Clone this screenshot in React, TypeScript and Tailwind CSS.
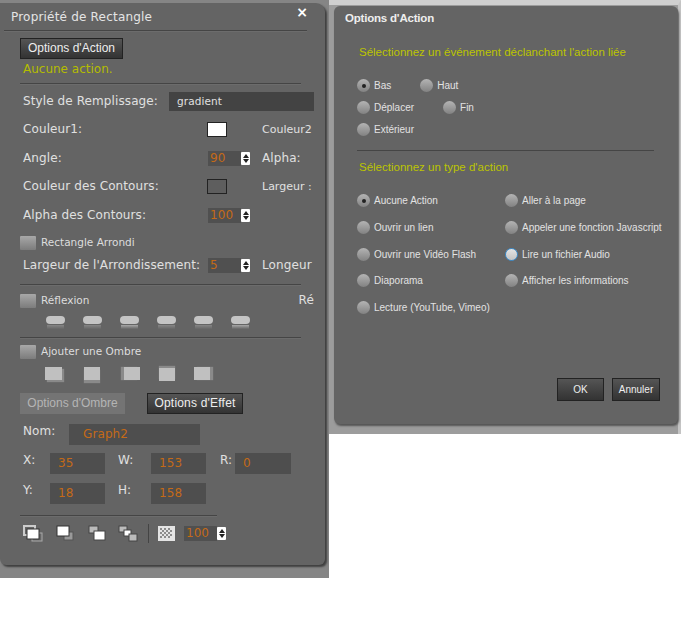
const sans = "font-['Liberation_Sans',Arial,sans-serif]";
const wide = "font-['DejaVu_Sans',Verdana,sans-serif]";

function Rule({ w }: { w: string }) {
  return <div className={`box-content h-px border-b border-[#6c6c6c] bg-[#454545] ${w}`} />;
}

function DarkButton({ label, className }: { label: string; className: string }) {
  return (
    <div className={`flex items-center justify-center border border-[#222] bg-gradient-to-b from-[#555] to-[#333] text-[#eee] ${sans} ${className}`}>
      {label}
    </div>
  );
}

function Check({ label }: { label: string }) {
  return (
    <div className="flex h-[15px] items-center gap-[5px]">
      <span className="h-[14px] w-[16px] rounded-[1px] bg-gradient-to-b from-[#a8a8a8] to-[#7c7c7c]" />
      <span className={`text-[10.5px] text-[#ddd] ${wide}`}>{label}</span>
    </div>
  );
}

function Stepper({ value }: { value: string }) {
  return (
    <div className="flex shrink-0 items-center">
      <div className={`flex h-[15px] w-[33px] items-center bg-[#505050] pl-[2px] text-[12px] text-[#c46a17] ${wide}`}>{value}</div>
      <div className="flex h-[13px] w-[9px] flex-col items-center justify-center gap-[1px] rounded-[1px] bg-white">
        <span className="h-0 w-0 border-x-[3px] border-b-[4px] border-x-transparent border-b-[#222]" />
        <span className="h-0 w-0 border-x-[3px] border-t-[4px] border-x-transparent border-t-[#222]" />
      </div>
    </div>
  );
}

function Field({ value, w, pl = "pl-2" }: { value: string; w: string; pl?: string }) {
  return <div className={`flex h-[21px] items-center bg-[#4e4e4e] text-[12px] text-[#c46a17] ${wide} ${w} ${pl}`}>{value}</div>;
}

function Radio({ label, checked, focus }: { label: string; checked?: boolean; focus?: boolean }) {
  return (
    <div className="flex h-[13px] items-center gap-[4px]">
      <span
        className={`flex h-[13px] w-[13px] shrink-0 items-center justify-center rounded-full bg-gradient-to-b ${
          focus ? "border border-[#3d8fd0] from-[#e4e4e4] to-[#c4c4c4]" : "from-[#b4b4b4] to-[#828282]"
        }`}
      >
        {checked && <span className="h-[4px] w-[4px] rounded-full bg-[#222]" />}
      </span>
      <span className={`whitespace-nowrap text-[10px] text-[#e2e2e2] ${sans}`}>{label}</span>
    </div>
  );
}

function Pill({ strong }: { strong: boolean }) {
  return (
    <div className="flex h-[13px] w-[19px] flex-col items-center">
      <span className="h-[8px] w-[19px] rounded-[4px] bg-[#c4c4c4]" />
      <span className={`mt-[1px] h-[4px] w-[17px] bg-gradient-to-b to-[#666] ${strong ? "from-[#a8a8a8]" : "from-[#868686]"}`} />
    </div>
  );
}

function StackIcon({ kind }: { kind: number }) {
  return (
    <svg width="21" height="17" viewBox="0 0 21 17">
      {kind === 0 && (
        <>
          <rect x="1" y="1" width="11" height="9" fill="#666" stroke="#ccc" strokeWidth="2" />
          <rect x="9" y="8" width="10" height="8" fill="#666" stroke="#aaa" />
          <rect x="4" y="4" width="12" height="10" fill="#fff" stroke="#333" />
        </>
      )}
      {kind === 1 && (
        <>
          <rect x="8" y="7" width="9" height="8" fill="#999" stroke="#555" />
          <rect x="1" y="1" width="12" height="10" fill="#fff" stroke="#333" />
        </>
      )}
      {kind === 2 && (
        <>
          <rect x="1" y="1" width="9" height="7" fill="#bbb" stroke="#444" />
          <rect x="6" y="6" width="11" height="9" fill="#fff" stroke="#444" />
        </>
      )}
      {kind === 3 && (
        <>
          <rect x="1" y="1" width="8" height="6" fill="#bbb" stroke="#444" />
          <rect x="6" y="5" width="7" height="6" fill="#fff" stroke="#444" />
          <rect x="11" y="9" width="8" height="7" fill="#bbb" stroke="#444" />
        </>
      )}
    </svg>
  );
}

function CheckerIcon() {
  return (
    <svg width="17" height="15" viewBox="0 0 17 15">
      <rect width="17" height="15" fill="#e4e4e4" />
      {[0, 1, 2, 3, 4].map((y) =>
        [0, 1, 2, 3, 4, 5].map((x) =>
          (x + y) % 2 === 0 ? <rect key={`${x}-${y}`} x={2 + x * 2} y={2 + y * 2} width="2" height="2" fill="#8c8c8c" /> : null,
        ),
      )}
    </svg>
  );
}

const rowText = `text-[12px] tracking-[0.1px] text-[#e0e0e0] ${wide}`;

function PropertyPanel() {
  return (
    <div className="relative mt-[3px] h-[562px] w-[325px] overflow-hidden rounded-b-[6px] rounded-tr-[9px] bg-[#646464] shadow-[2px_2px_2px_#3f3f3f]">
      <span className={`absolute right-[17px] top-[2px] text-[14px] font-bold text-white ${wide}`}>×</span>
      <div className={`pl-[11px] pt-[7px] text-[12px] tracking-[0.2px] text-[#e4e4e4] ${wide}`}>Propriété de Rectangle</div>
      <div className="ml-[4px] mt-[5px]"><Rule w="w-[303px]" /></div>

      <div className="ml-[20px] mt-[6px] flex flex-col items-start">
        <DarkButton label="Options d'Action" className="h-[21px] w-[103px] text-[12px]" />
        <div className={`ml-[3px] mt-[3px] text-[12px] text-[#b4bd00] ${wide}`}>Aucune action.</div>
        <div className="mt-[6px]"><Rule w="w-[281px]" /></div>
      </div>

      <div className={`ml-[23px] mt-[7px] w-[291px] overflow-hidden ${rowText}`}>
        <div className="flex h-[19px] items-center">
          <span className="w-[146px] shrink-0 whitespace-nowrap">Style de Remplissage:</span>
          <div className="flex h-[19px] flex-1 items-center bg-[#434343] pl-2 text-[10.5px]">gradient</div>
        </div>
        <div className="mt-[9px] flex h-[19px] items-center">
          <span className="w-[184px] shrink-0">Couleur1:</span>
          <span className="h-[15px] w-[20px] shrink-0 border border-[#222] bg-white" />
          <span className="ml-[35px] shrink-0 whitespace-nowrap text-[11px] tracking-normal">Couleur2</span>
        </div>
        <div className="mt-[10px] flex h-[19px] items-center">
          <span className="w-[185px] shrink-0">Angle:</span>
          <Stepper value="90" />
          <span className="ml-[12px]">Alpha:</span>
        </div>
        <div className="mt-[9px] flex h-[19px] items-center">
          <span className="w-[184px] shrink-0 whitespace-nowrap">Couleur des Contours:</span>
          <span className="h-[15px] w-[20px] shrink-0 border border-[#222] bg-[#5e5e5e]" />
          <span className="ml-[35px] shrink-0 whitespace-nowrap text-[11px] tracking-normal">Largeur :</span>
        </div>
        <div className="mt-[10px] flex h-[19px] items-center">
          <span className="w-[185px] shrink-0">Alpha des Contours:</span>
          <Stepper value="100" />
        </div>
      </div>

      <div className="ml-[20px] mt-[10px]"><Check label="Rectangle Arrondi" /></div>

      <div className={`ml-[23px] mt-[6px] flex h-[19px] w-[291px] items-center overflow-hidden ${rowText}`}>
        <span className="w-[185px] shrink-0 whitespace-nowrap">Largeur de l'Arrondissement:</span>
        <Stepper value="5" />
        <span className="ml-[12px] shrink-0 whitespace-nowrap">Longeur</span>
      </div>

      <div className="ml-[20px] mt-[9px]"><Rule w="w-[281px]" /></div>

      <div className="ml-[20px] mt-[7px] flex w-[294px] items-center justify-between overflow-hidden">
        <Check label="Réflexion" />
        <span className={rowText}>Ré</span>
      </div>

      <div className="ml-[46px] mt-[8px] flex gap-[18px]">
        {[0, 1, 2, 3, 4, 5].map((i) => (
          <Pill key={i} strong={i === 2 || i === 5} />
        ))}
      </div>

      <div className="ml-[20px] mt-[8px]"><Rule w="w-[281px]" /></div>

      <div className="ml-[20px] mt-[5px]"><Check label="Ajouter une Ombre" /></div>

      <div className="ml-[45px] mt-[8px] flex h-[13px]">
        <span className="h-[13px] w-[17px] bg-[#c0c0c0] shadow-[2px_2px_1px_#8a8a8a]" />
        <span className="ml-[22px] h-[13px] w-[16px] bg-[#c0c0c0] shadow-[0_3px_1px_#8a8a8a]" />
        <span className="ml-[24px] h-[13px] w-[16px] bg-[#c0c0c0] shadow-[-3px_0_1px_#8a8a8a]" />
        <span className="ml-[19px] mt-[1px] h-[13px] w-[16px] bg-[#c0c0c0] shadow-[0_-2px_1px_#8a8a8a]" />
        <span className="ml-[19px] h-[13px] w-[16px] bg-[#c0c0c0] shadow-[3px_0_1px_#8a8a8a]" />
      </div>

      <div className="ml-[20px] mt-[13px] flex gap-[22px]">
        <div className={`flex h-[21px] w-[105px] items-center justify-center bg-[#747474] text-[12px] text-[#b4b4b4] ${sans}`}>Options d'Ombre</div>
        <DarkButton label="Options d'Effet" className="h-[21px] w-[96px] text-[12px] tracking-[0.2px]" />
      </div>

      <div className={`ml-[23px] mt-[10px] flex ${rowText}`}>
        <span className="w-[46px]">Nom:</span>
        <Field value="Graph2" w="w-[131px]" pl="pl-[14px]" />
      </div>

      <div className={`ml-[23px] mt-[8px] flex ${rowText}`}>
        <span className="w-[27px]">X:</span>
        <Field value="35" w="w-[55px]" />
        <span className="ml-[13px] w-[33px]">W:</span>
        <Field value="153" w="w-[55px]" />
        <span className="ml-[14px] w-[15px]">R:</span>
        <Field value="0" w="w-[56px]" />
      </div>

      <div className={`ml-[23px] mt-[9px] flex ${rowText}`}>
        <span className="w-[27px]">Y:</span>
        <Field value="18" w="w-[55px]" />
        <span className="ml-[13px] w-[33px]">H:</span>
        <Field value="158" w="w-[55px]" />
      </div>

      <div className="ml-[20px] mt-[11px]"><Rule w="w-[197px]" /></div>

      <div className="ml-[23px] mt-[7px] flex items-center">
        <StackIcon kind={0} />
        <span className="ml-[12px]"><StackIcon kind={1} /></span>
        <span className="ml-[11px]"><StackIcon kind={2} /></span>
        <span className="ml-[9px]"><StackIcon kind={3} /></span>
        <span className="ml-[9px] h-[19px] w-px bg-[#444]" />
        <span className="ml-[9px]"><CheckerIcon /></span>
        <span className="ml-[9px]"><Stepper value="100" /></span>
      </div>
    </div>
  );
}

function ActionPanel() {
  return (
    <div className="ml-[5px] mt-px h-[418px] w-[344px] rounded-[6px] bg-[#646464] shadow-[1px_2px_2px_#555]">
      <div className={`pl-[11px] pt-[5px] text-[11.5px] font-bold tracking-[-0.2px] text-[#eee] ${sans}`}>Options d'Action</div>
      <div className={`mt-[19px] pl-[25px] text-[11.5px] text-[#bcc400] ${sans}`}>Sélectionnez un événement déclanchant l'action liée</div>

      <div className="ml-[23px] mt-[19px] flex flex-col gap-[9px]">
        <div className="flex gap-[29px]">
          <Radio label="Bas" checked />
          <Radio label="Haut" />
        </div>
        <div className="flex gap-[29px]">
          <Radio label="Déplacer" />
          <Radio label="Fin" />
        </div>
        <Radio label="Extérieur" />
      </div>

      <div className="ml-[23px] mt-[14px] h-px w-[297px] bg-[#454545]" />

      <div className={`mt-[9px] pl-[25px] text-[11.5px] text-[#bcc400] ${sans}`}>Sélectionnez un type d'action</div>

      <div className="ml-[23px] mt-[19px] grid w-[310px] grid-cols-[148px_1fr] gap-y-[13.75px]">
        <Radio label="Aucune Action" checked />
        <Radio label="Aller à la page" />
        <Radio label="Ouvrir un lien" />
        <Radio label="Appeler une fonction Javascript" />
        <Radio label="Ouvrir une Vidéo Flash" />
        <Radio label="Lire un fichier Audio" focus />
        <Radio label="Diaporama" />
        <Radio label="Afficher les informations" />
        <Radio label="Lecture (YouTube, Vimeo)" />
      </div>

      <div className="mr-[18px] mt-[64px] flex justify-end gap-[8px]">
        <DarkButton label="OK" className="h-[23px] w-[47px] text-[10px]" />
        <DarkButton label="Annuler" className="h-[23px] w-[48px] text-[10px]" />
      </div>
    </div>
  );
}

export default function App() {
  return (
    <div className={`flex h-[624px] w-[700px] items-start bg-white leading-[15px] ${sans}`}>
      <div className="h-[578px] w-[329px] bg-[#858585]">
        <PropertyPanel />
      </div>
      <div className="box-content h-[429px] w-[349px] border-r-[3px] border-t-[5px] border-r-[#c4c4c4] border-t-[#cfcfcf] bg-[#9c9c9c]">
        <ActionPanel />
      </div>
    </div>
  );
}
